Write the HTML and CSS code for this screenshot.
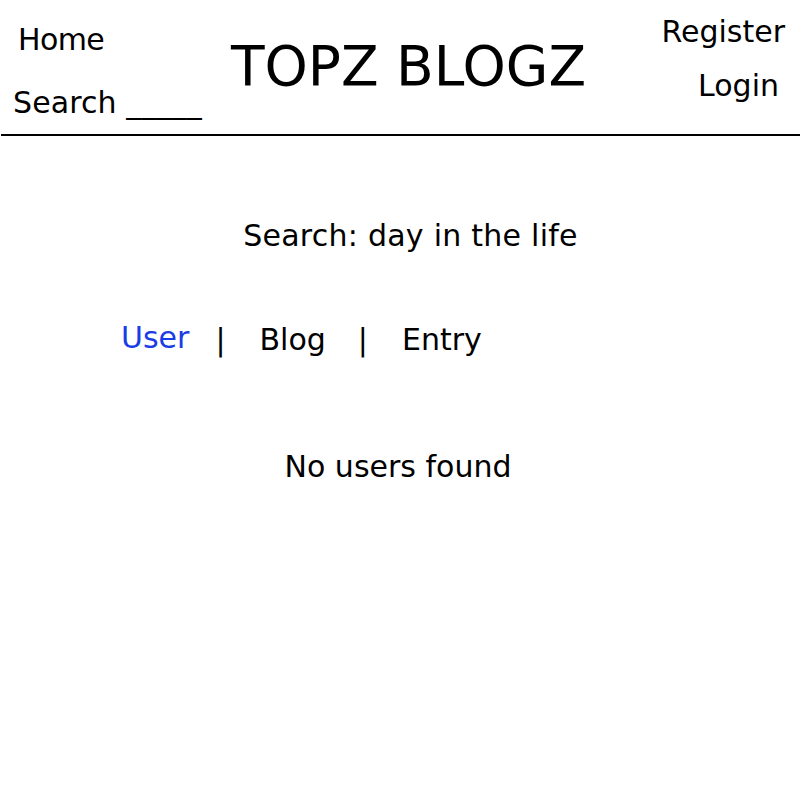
FILE: index.html
```html
<!DOCTYPE html>
<html>
<head>
<meta charset="utf-8">
<link rel="stylesheet" href="styles.css">
</head>
<body>
<header class="header">
  <div class="left">
    <a class="nav home">Home</a>
    <a class="nav search">Search _____</a>
  </div>
  <h1 class="title">TOPZ BLOGZ</h1>
  <div class="right">
    <a class="nav register">Register</a>
    <a class="nav login">Login</a>
  </div>
</header>
<main class="main">
  <p class="query">Search: day in the life</p>
  <div class="tabs">
    <span class="tab active">User</span>
    <span class="sep sep-first">|</span>
    <span class="tab">Blog</span>
    <span class="sep sep-second">|</span>
    <span class="tab">Entry</span>
  </div>
  <p class="empty">No users found</p>
</main>
</body>
</html>
```
FILE: styles.css
```css
html, body {
  margin: 0;
  padding: 0;
  background: #fff;
  color: #000;
  font-family: "DejaVu Sans", Verdana, sans-serif;
}
.header {
  display: grid;
  grid-template-columns: 1fr auto 1fr;
  align-items: start;
  height: 134px;
  border-bottom: 2px solid #000;
  margin-left: 1px;
}
.left {
  display: flex;
  flex-direction: column;
  align-items: flex-start;
  padding-left: 12px;
  padding-top: 24px;
}
.nav {
  font-size: 30px;
  line-height: 32px;
  white-space: nowrap;
}
.home {
  margin-left: 5px;
  letter-spacing: -0.6px;
}
.search {
  margin-top: 31px;
  letter-spacing: 0.1px;
}
.title {
  margin: 0;
  font-weight: normal;
  font-size: 55px;
  line-height: 60px;
  padding-top: 36px;
  padding-left: 16px;
  white-space: nowrap;
}
.right {
  display: flex;
  flex-direction: column;
  align-items: flex-end;
  padding-right: 15px;
  padding-top: 16px;
}
.login {
  margin-top: 22px;
  margin-right: 6px;
}
.main {
  display: flex;
  flex-direction: column;
}
.query {
  margin: 82px 0 0 0;
  text-align: center;
  font-size: 30px;
  line-height: 36px;
  padding-left: 21px;
  letter-spacing: 0.25px;
}
.tabs {
  display: flex;
  align-items: baseline;
  margin-top: 68px;
  padding-left: 121px;
  font-size: 30px;
  line-height: 36px;
}
.tab.active {
  color: #1a3be6;
  position: relative;
  top: -2px;
}
.sep-first {
  margin: 0 34px 0 26px;
}
.sep-second {
  margin: 0 34px 0 32px;
}
.empty {
  margin: 91px 0 0 0;
  text-align: center;
  font-size: 30px;
  line-height: 36px;
  padding-right: 4px;
}
```
